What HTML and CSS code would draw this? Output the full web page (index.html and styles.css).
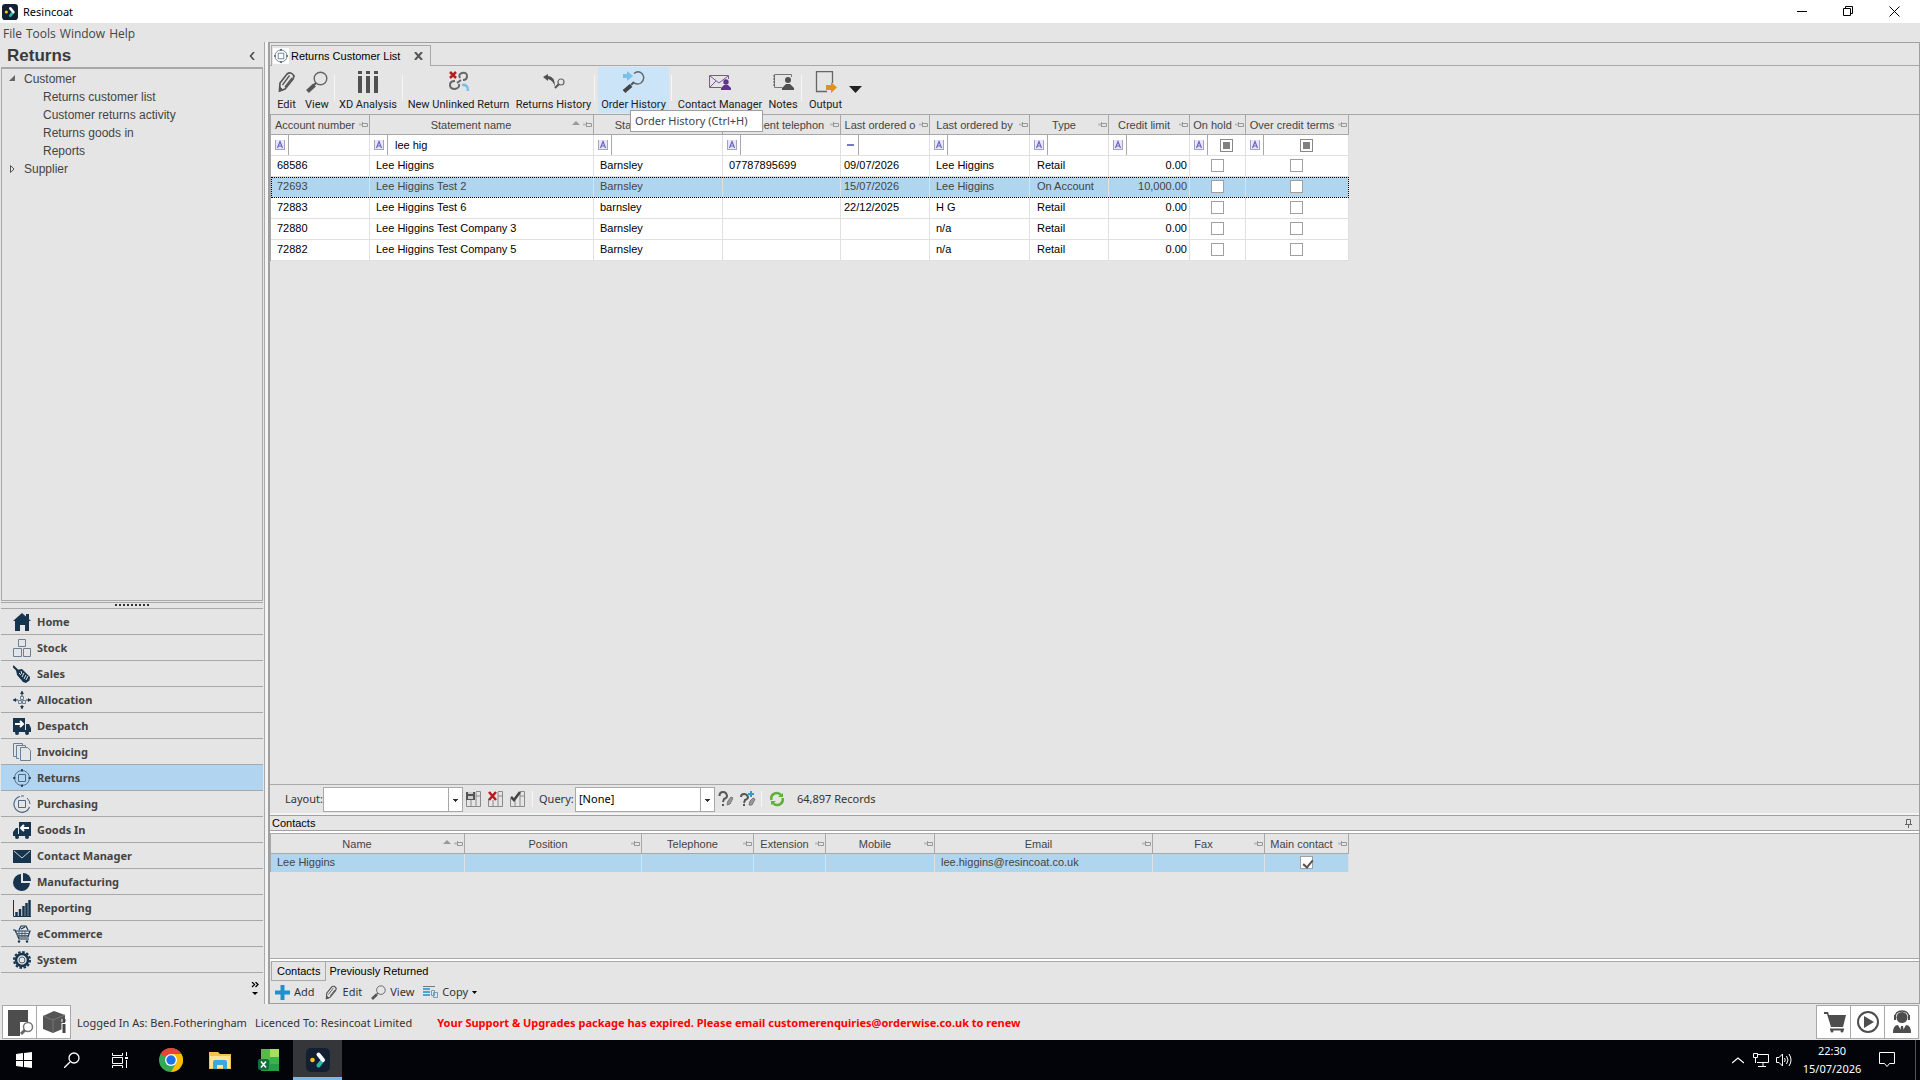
FILE: index.html
```
<!DOCTYPE html>
<html lang="en">
<head>
<meta charset="utf-8">
<title>Resincoat</title>
<link rel="stylesheet" href="styles.css">
</head>
<body>
<svg width="0" height="0" class="defs" aria-hidden="true">
  <symbol id="pin" viewBox="0 0 9 7"><path d="M0 3.500h3" stroke="#bbb" stroke-width="2"/><path d="M3.500 1v5M4 2.500h4.500v3H4" fill="none" stroke="#999"/></symbol>
  <symbol id="abc" viewBox="0 0 10 10"><path d="M0 0h10v10H0z" fill="#e8e8fa"/><path d="M.5 0v10M0 9.500h10M9.500 0v10" stroke="#a3a1c8" fill="none"/><path d="M2.500 8 5 1.500 7.500 8M3.500 6h3" fill="none" stroke="#6a63c8" stroke-width="1.200"/></symbol>
  <symbol id="pencil" viewBox="0 0 22 22"><path d="m3.500 20 .5-8 7-9q4-3 7 2l-1 3-8 10z" fill="none" stroke="#555" stroke-width="1.700"/><path d="m6.500 14 7-9.500M9 16l7-9" stroke="#555" stroke-width="1.300"/><path d="m3.500 20 .5-4 3 3z" fill="#555" stroke="#555"/></symbol>
  <symbol id="lens" viewBox="0 0 22 22"><circle cx="14.500" cy="7.500" r="6.300" fill="none" stroke="#666" stroke-width="1.400"/><path d="M1.500 20.500 8.500 14" stroke="#555" stroke-width="4"/><path d="m8 14 2-2" stroke="#555" stroke-width="2"/></symbol>
  <symbol id="target" viewBox="0 0 18 18"><circle cx="9" cy="9" r="7.500" fill="none" stroke="#4c6a85"/><path d="M5.500 5.500h7v7h-7z" fill="none" stroke="#4c6a85"/><path d="M9 0v2.500M9 15.500V18M0 9h2.500M15.500 9H18" stroke="#17344f" stroke-width="1.500"/></symbol>
  <symbol id="brand" viewBox="0 0 24 24"><rect width="24" height="24" rx="5" fill="#132033"/><circle cx="6.500" cy="12" r="2.300" fill="#f9c61a"/><path d="m12.500 17.500 4-5" stroke="#2bb9a9" stroke-width="4" stroke-linecap="round"/><path d="m12.500 6.500 4.500 5.500" stroke="#fff" stroke-width="4" stroke-linecap="round"/></symbol>
  <symbol id="sheet" viewBox="0 0 16 16"><path d="M.5 8v7.500h14V.5H10M5 9v6M10 1v14M10 5h5" fill="none" stroke="#8a8a8a"/></symbol>
</svg>

<header class="titlebar">
  <svg class="i16"><use href="#brand"/></svg>
  <h1>Resincoat</h1>
  <div class="winbuttons">
    <button aria-label="Minimise"><svg width="11" height="11"><path d="M0 5.500h10" stroke="#000"/></svg></button>
    <button aria-label="Restore"><svg width="11" height="11"><path d="M.5 2.500h7v7h-7zM2.500 2V.5h7v7H8" fill="none" stroke="#000"/></svg></button>
    <button aria-label="Close"><svg width="11" height="11"><path d="m.5.5 10 10m0-10-10 10" stroke="#000"/></svg></button>
  </div>
</header>
<nav class="menubar"><button>File</button><button>Tools</button><button>Window</button><button>Help</button></nav>

<div class="workspace">
  <aside class="sidebar">
    <div class="side-head"><h2>Returns</h2><button aria-label="Collapse"><svg width="6" height="8"><path d="M5 0 1.500 4 5 8" fill="none" stroke="#444" stroke-width="1.500"/></svg></button></div>
    <ul class="tree">
      <li><svg class="twist"><path d="M6 0v6H0z" fill="#666"/></svg>Customer
        <ul><li>Returns customer list</li><li>Customer returns activity</li><li>Returns goods in</li><li>Reports</li></ul>
      </li>
      <li><svg class="twist"><path d="M1.500.5v7L5 4z" fill="none" stroke="#555"/></svg>Supplier</li>
    </ul>
    <div class="grip"><i></i></div>
    <nav class="modules">
      <a href="#"><svg><path d="m9 0 9 8h-2v10h-4v-6H7v6H2V8H0z" fill="#17344f"/><path d="M13 1h3v5h-3z" fill="#17344f"/></svg>Home</a>
      <a href="#"><svg><path d="M5.500.5h7v7h-7zM.5 9.500h8v8h-8zM10.500 9.500h7v8h-7z" fill="none" stroke="#6b8093"/></svg>Stock</a>
      <a href="#"><svg><path d="m0 1 5 5" stroke="#17344f" stroke-width="2"/><path d="m3 5 6-1 8 8-.5 3.500L13 18l-3-1-6-7z" fill="#17344f"/><path d="m6 8 2 2m0-4 1 3m2-1-2 4m4-2-2 4m4-3-2 4" stroke="#e5e5e5"/></svg>Sales</a>
      <a href="#"><svg><path d="M9 0v5M9 14v4M0 9h5M13 9h5" stroke="#17344f"/><path d="m7 3 2-3 2 3zM7 15l2 3 2-3zM3 7 0 9l3 2zM15 7l3 2-3 2z" fill="#17344f"/><path d="M7.500 5.500h3v3h-3zM5.500 9.500h3v3h-3zM9.500 9.500h3v3h-3z" fill="none" stroke="#6b8093"/></svg>Allocation</a>
      <a href="#"><svg><path d="M0 1h12v12H0zM13 7h3l2 4v4H0v-2h13z" fill="#17344f"/><circle cx="4" cy="16" r="2" fill="#17344f"/><circle cx="14" cy="16" r="2" fill="#17344f"/><path d="M2 7h7M7 4l3 3-3 3" fill="none" stroke="#fff" stroke-width="2"/></svg>Despatch</a>
      <a href="#"><svg><path d="M3 13.500H.5V.5h9V2M6 15.500H3.500v-13h9V4M7.500 4.500h7l3 3v10h-10z" fill="none" stroke="#6b8093"/></svg>Invoicing</a>
      <a href="#" class="on"><svg><use href="#target"/></svg>Returns</a>
      <a href="#"><svg><path d="M7 1.500A8 8 0 1 0 16.500 12M8 1h3" fill="none" stroke="#4c6a85" stroke-width="1.200"/><path d="M5.500 5.500h7v7h-7zM14 3q3 3 3 6" fill="none" stroke="#4c6a85"/></svg>Purchasing</a>
      <a href="#"><svg><path d="M6 1h12v12H6zM5 7H3l-3 4v4h18v-2H5z" fill="#17344f"/><circle cx="4" cy="16" r="2" fill="#17344f"/><circle cx="14" cy="16" r="2" fill="#17344f"/><path d="M9 7h7M11 4 8 7l3 3" fill="none" stroke="#fff" stroke-width="2"/></svg>Goods In</a>
      <a href="#"><svg><path d="M0 3h18v13H0z" fill="#17344f"/><path d="m1 4 8 7 8-7" fill="none" stroke="#c9d2da"/></svg>Contact Manager</a>
      <a href="#"><svg><path d="M8 1v9h9A8.500 8.500 0 1 1 8 1z" fill="#17344f"/><path d="M10 0a8 8 0 0 1 8 8h-8z" fill="#17344f"/></svg>Manufacturing</a>
      <a href="#"><svg><path d="M.5 1v16.500H18" fill="none" stroke="#17344f"/><path d="M3.500 17v-4M7 17v-7M10.500 17V7M13.500 17V4M16.500 17V1" stroke="#17344f" stroke-width="2.500"/></svg>Reporting</a>
      <a href="#"><svg><path d="M0 5h2l4 9h10M2 6h15l-2 6H5M6 5l2-4 5 0 2 4M8 4l4-2" fill="none" stroke="#17344f" stroke-width="1.200"/><path d="M3 8.500h13M4 10.500h11M6 6v6M9 6v6M12 6v6" stroke="#4c6479"/><circle cx="6" cy="16.500" r="1.200" fill="#17344f"/><circle cx="14" cy="16.500" r="1.200" fill="#17344f"/></svg>eCommerce</a>
      <a href="#"><svg><circle cx="9" cy="9" r="8" fill="none" stroke="#17344f" stroke-width="2" stroke-dasharray="2.500 1.690"/><circle cx="9" cy="9" r="6" fill="none" stroke="#17344f" stroke-width="2.500"/><circle cx="9" cy="9" r="3" fill="none" stroke="#4c6479"/></svg>System</a>
    </nav>
    <div class="side-foot"><button aria-label="Configure"><svg width="8" height="14"><path d="m1 0 2.500 2.500L1 5M4.500 0 7 2.500 4.500 5" fill="none" stroke="#000" stroke-width="1.300"/><path d="M1 10h6l-3 3z"/></svg></button></div>
  </aside>
  <div class="splitter"></div>

  <main class="panel">
    <div class="tabs"><div class="tab"><svg viewBox="-1 -1 20 20"><use href="#target" width="18" height="18"/></svg><span>Returns Customer List</span><button aria-label="Close tab"><svg width="9" height="8"><path d="m1 0 7 8M8 0 1 8" stroke="#555" stroke-width="2"/></svg></button></div></div>
    <div class="toolbar">
      <button><svg><use href="#pencil"/></svg>Edit</button>
      <button><svg><use href="#lens"/></svg>View</button>
      <i></i>
      <button><svg><path d="M3 0v3M11 0v3M19 0v3M3 5v17M11 5v17M19 5v17" stroke="#505050" stroke-width="4"/></svg>XD Analysis</button>
      <i></i>
      <button><svg><path d="m2 1 6 6m0-6L2 7" stroke="#b81c1c" stroke-width="2.500"/><g fill="none" stroke="#666" stroke-width="2"><path d="M12 7q-2-4 2-5 5-1 5 3t-4 4"/><path d="M7 10q-5 0-5 4t5 4q5-1 4-5"/><path d="m9 12 4-3"/></g><path d="M14 14q6-1 6 6" fill="none" stroke="#7cc0ea" stroke-width="2.500"/></svg>New Unlinked Return</button>
      <button><svg><path d="m0 6 5-3v2q7 0 7 11-2-7-7-8v2z" fill="#505050"/><circle cx="18" cy="11" r="3" fill="none" stroke="#666" stroke-width="1.200"/><path d="m12 17 4-4" stroke="#555" stroke-width="2"/></svg>Returns History</button>
      <i></i>
      <span class="tipped">
        <button class="hot"><svg><path d="M0 3h4V0l6 5-6 5V7H0z" fill="#7cc0ea"/><path d="M11 2.500Q15-1 19 2.500q4 5-1 9.500-3 2-7 0" fill="none" stroke="#666" stroke-width="1.400"/><path d="m1 20.500 7-6" stroke="#444" stroke-width="4"/><path d="m8 14 3-3" stroke="#555" stroke-width="2"/></svg>Order History</button>
        <span class="tip" role="tooltip">Order History (Ctrl+H)</span>
      </span>
      <i></i>
      <button><svg><path d="M12 16.500H.5v-12h19V8M1 5l9 7 9-7M1 16l6-6" fill="none" stroke="#7a55a0"/><circle cx="17" cy="11" r="2.700" fill="#62328f"/><path d="M12 19v-2l3-3h4l3 3v2z" fill="#62328f"/></svg>Contact Manager</button>
      <button><svg><path d="M10 16.500H2.500v-13h17V6" fill="none" stroke="#777"/><path d="M1 5h2M1 8h2M1 11h2M1 14h2" stroke="#555"/><circle cx="16" cy="9" r="3" fill="#505050"/><path d="M10 19v-2l4-4h4l4 4v2z" fill="#505050"/></svg>Notes</button>
      <i></i>
      <button><svg><path d="M12 20.500H1.500V.5h16V12" fill="none" stroke="#666" stroke-width="1.300"/><path d="M11 14h5v-3l6 5.500-6 5.500v-3h-5z" fill="#df9318"/></svg>Output</button>
      <button class="more" aria-label="More output options"><svg width="13" height="7"><path d="M0 0h13L6.500 7z" fill="#222"/></svg></button>
    </div>

    <div class="gridarea">
      <table class="grid customers">
        <colgroup><col style="width:99px"><col style="width:224px"><col style="width:129px"><col style="width:118px"><col style="width:89px"><col style="width:100px"><col style="width:79px"><col style="width:81px"><col style="width:56px"><col style="width:103px"></colgroup>
        <thead>
          <tr>
            <th><div><span>Account number</span><svg><use href="#pin"/></svg></div></th>
            <th><div><span>Statement name</span><b></b><svg><use href="#pin"/></svg></div></th>
            <th><div><span>Statement town</span><svg><use href="#pin"/></svg></div></th>
            <th><div><span>Statement telephon</span><svg><use href="#pin"/></svg></div></th>
            <th><div><span>Last ordered o</span><svg><use href="#pin"/></svg></div></th>
            <th><div><span>Last ordered by</span><svg><use href="#pin"/></svg></div></th>
            <th><div><span>Type</span><svg><use href="#pin"/></svg></div></th>
            <th><div><span>Credit limit</span><svg><use href="#pin"/></svg></div></th>
            <th><div><span>On hold</span><svg><use href="#pin"/></svg></div></th>
            <th><div><span>Over credit terms</span><svg><use href="#pin"/></svg></div></th>
          </tr>
          <tr class="filter">
            <td><div><button aria-label="Match"><svg><use href="#abc"/></svg></button><input type="text" aria-label="Filter account number"></div></td>
            <td><div><button aria-label="Match"><svg><use href="#abc"/></svg></button><input type="text" aria-label="Filter statement name" value="lee hig"></div></td>
            <td><div><button aria-label="Match"><svg><use href="#abc"/></svg></button><input type="text" aria-label="Filter town"></div></td>
            <td><div><button aria-label="Match"><svg><use href="#abc"/></svg></button><input type="text" aria-label="Filter telephone"></div></td>
            <td><div><button aria-label="Match"><svg><path d="M2 5h7" stroke="#77c" stroke-width="2"/></svg></button><input type="text" aria-label="Filter last ordered on"></div></td>
            <td><div><button aria-label="Match"><svg><use href="#abc"/></svg></button><input type="text" aria-label="Filter last ordered by"></div></td>
            <td><div><button aria-label="Match"><svg><use href="#abc"/></svg></button><input type="text" aria-label="Filter type"></div></td>
            <td><div><button aria-label="Match"><svg><use href="#abc"/></svg></button><input type="text" aria-label="Filter credit limit"></div></td>
            <td><div><button aria-label="Match"><svg><use href="#abc"/></svg></button><span><input type="checkbox" class="mixed" aria-label="Filter on hold"></span></div></td>
            <td><div><button aria-label="Match"><svg><use href="#abc"/></svg></button><span><input type="checkbox" class="mixed" aria-label="Filter over credit terms"></span></div></td>
          </tr>
        </thead>
        <tbody>
          <tr><td>68586</td><td>Lee Higgins</td><td>Barnsley</td><td>07787895699</td><td>09/07/2026</td><td>Lee Higgins</td><td>Retail</td><td>0.00</td><td><input type="checkbox" aria-label="On hold"></td><td><input type="checkbox" aria-label="Over credit terms"></td></tr>
          <tr class="sel focus"><td>72693</td><td>Lee Higgins Test 2</td><td>Barnsley</td><td></td><td>15/07/2026</td><td>Lee Higgins</td><td>On Account</td><td>10,000.00</td><td><input type="checkbox" aria-label="On hold"></td><td><input type="checkbox" aria-label="Over credit terms"></td></tr>
          <tr><td>72883</td><td>Lee Higgins Test 6</td><td>barnsley</td><td></td><td>22/12/2025</td><td>H G</td><td>Retail</td><td>0.00</td><td><input type="checkbox" aria-label="On hold"></td><td><input type="checkbox" aria-label="Over credit terms"></td></tr>
          <tr><td>72880</td><td>Lee Higgins Test Company 3</td><td>Barnsley</td><td></td><td></td><td>n/a</td><td>Retail</td><td>0.00</td><td><input type="checkbox" aria-label="On hold"></td><td><input type="checkbox" aria-label="Over credit terms"></td></tr>
          <tr><td>72882</td><td>Lee Higgins Test Company 5</td><td>Barnsley</td><td></td><td></td><td>n/a</td><td>Retail</td><td>0.00</td><td><input type="checkbox" aria-label="On hold"></td><td><input type="checkbox" aria-label="Over credit terms"></td></tr>
        </tbody>
      </table>
    </div>

    <div class="querybar">
      <label for="layout">Layout:</label>
      <select id="layout"><option></option></select>
      <button aria-label="Save layout"><svg><use href="#sheet"/><path d="M0 1h9v8H0z" fill="#555"/><path d="M2 1h5v2H2zM2 5h5v3H2z" fill="#ccc"/></svg></button>
      <button aria-label="Delete layout"><svg><use href="#sheet"/><path d="m1 1 7 8m0-8L1 9" stroke="#b81c1c" stroke-width="2.500"/></svg></button>
      <button aria-label="Default layout"><svg><use href="#sheet"/><path d="m1 6 3 3 6-8" fill="none" stroke="#444" stroke-width="2.500"/></svg></button>
      <i></i>
      <label for="query">Query:</label>
      <select id="query"><option>[None]</option></select>
      <button aria-label="Edit query"><svg><path d="M1.500 5q0-4 3.500-4t4 4q0 2-3 3l-1 3M5 13v2" fill="none" stroke="#555" stroke-width="2"/><path d="m9 14 1-4 3-4 2 1-3 6z" fill="#999" stroke="#777"/></svg></button>
      <button aria-label="Add query"><svg><path d="M1 6q0-3 3-3t4 3q0 2-3 3l-1 3M4 13v2" fill="none" stroke="#555" stroke-width="2"/><path d="m9 14 1-4 3-3 2 1-3 6z" fill="#999" stroke="#777"/><path d="M11 0v6M8 3h6" stroke="#2f9bd6" stroke-width="2"/></svg></button>
      <i class="tight"></i>
      <button aria-label="Refresh"><svg><path d="M2.500 9A5.500 5.500 0 0 1 12 4M13.500 7A5.500 5.500 0 0 1 4 12" fill="none" stroke="#5fb033" stroke-width="2.500"/><path d="M9 6h5V2zM7 10H2v4z" fill="#5fb033"/></svg></button>
      <output>64,897 Records</output>
    </div>

    <section class="detail">
      <div class="caption"><h3>Contacts</h3><button aria-label="Pin"><svg width="7" height="9"><path d="M1.500.5h4v5h-4zM0 5.500h7M3.500 6v3" fill="none" stroke="#666"/></svg></button></div>
      <div class="detailgrid">
        <table class="grid contacts">
          <colgroup><col style="width:194px"><col style="width:177px"><col style="width:112px"><col style="width:72px"><col style="width:109px"><col style="width:218px"><col style="width:112px"><col style="width:84px"></colgroup>
          <thead><tr>
            <th><div><span>Name</span><b></b><svg><use href="#pin"/></svg></div></th>
            <th><div><span>Position</span><svg><use href="#pin"/></svg></div></th>
            <th><div><span>Telephone</span><svg><use href="#pin"/></svg></div></th>
            <th><div><span>Extension</span><svg><use href="#pin"/></svg></div></th>
            <th><div><span>Mobile</span><svg><use href="#pin"/></svg></div></th>
            <th><div><span>Email</span><svg><use href="#pin"/></svg></div></th>
            <th><div><span>Fax</span><svg><use href="#pin"/></svg></div></th>
            <th><div><span>Main contact</span><svg><use href="#pin"/></svg></div></th>
          </tr></thead>
          <tbody><tr class="sel"><td>Lee Higgins</td><td></td><td></td><td></td><td></td><td>lee.higgins@resincoat.co.uk</td><td></td><td><input type="checkbox" checked aria-label="Main contact"></td></tr></tbody>
        </table>
      </div>
      <div class="subtabs"><button class="on">Contacts</button><button>Previously Returned</button></div>
      <div class="subbar">
        <button><svg viewBox="0 0 15 15"><path d="M7.500 0v15M0 7.500h15" stroke="#2090d0" stroke-width="4"/></svg>Add</button>
        <button><svg viewBox="0 0 22 22"><use href="#pencil" width="22" height="22"/></svg>Edit</button>
        <button><svg viewBox="0 0 22 22"><use href="#lens" width="22" height="22"/></svg>View</button>
        <button><svg viewBox="0 0 15 15"><path d="M0 4h7M0 7h7M0 10h7" stroke="#4ba3d6" stroke-width="2"/><path d="M0 1.500h12" stroke="#777"/><path d="M8.500 5.500h3v5h-3zM10.500 7.500h4v5h-4z" fill="#dbe9f2" stroke="#7a9bb0"/></svg>Copy<svg class="drop"><path d="M0 0h5L2.500 3z"/></svg></button>
      </div>
    </section>
  </main>
</div>

<footer class="statusbar">
  <button class="tile" aria-label="Find"><svg viewBox="0 0 28 28"><path d="M2 2h20v12h-8v14H2z" fill="#4d4d4d"/><circle cx="22" cy="19" r="4.500" fill="none" stroke="#777" stroke-width="1.500"/><path d="m15 26 4-4" stroke="#666" stroke-width="3"/></svg></button>
  <button class="tile" aria-label="Product information"><svg viewBox="0 0 28 28"><path d="m14 3 11 4v13l-12 5-10-4V8z" fill="#555"/><path d="m3 8 10 4 12-5M13 12v13" fill="none" stroke="#777"/><path d="M24 11v3M24 15v10" stroke="#fff" stroke-width="5"/><path d="M24 11v3M24 16v9" stroke="#444" stroke-width="3"/></svg></button>
  <p>Logged In As: Ben.Fotheringham</p>
  <p>Licenced To: Resincoat Limited</p>
  <strong>Your Support &amp; Upgrades package has expired. Please email customerenquiries@orderwise.co.uk to renew</strong>
  <div class="right">
    <button class="tile" aria-label="Shop"><svg viewBox="0 0 28 28"><path d="M4 4h4l1 3h17l-3 12H11L7 6H4z" fill="#4d4d4d"/><path d="M10 21.500h14" stroke="#4d4d4d" stroke-width="2"/><circle cx="12" cy="23" r="1.500" fill="#4d4d4d"/><circle cx="22" cy="23" r="1.500" fill="#4d4d4d"/></svg></button>
    <button class="tile" aria-label="Play"><svg viewBox="0 0 28 28"><circle cx="14" cy="14" r="10" fill="none" stroke="#4d4d4d" stroke-width="2"/><path d="M10 8v12l10-6z" fill="#4d4d4d"/></svg></button>
    <button class="tile" aria-label="Support"><svg viewBox="0 0 28 28"><circle cx="14" cy="9.500" r="5.500" fill="#4d4d4d"/><path d="M7 10q0-7 7-7t7 7" fill="none" stroke="#4d4d4d" stroke-width="1.300"/><path d="M6 7h2v5H6zM20 7h2v5h-2zM5 25q0-8 5-8h8q5 0 5 8z" fill="#4d4d4d"/><path d="m10 17 4 7 4-7z" fill="#fff"/><path d="M13 18h2l1 6h-4z" fill="#4d4d4d"/></svg></button>
  </div>
</footer>

<div class="taskbar">
  <button aria-label="Start"><svg width="16" height="16"><path d="m0 2 7-1v7H0zM8 1l8-1v8H8zM0 9h7v6l-7-1zM8 9h8v7l-8-1z" fill="#fff"/></svg></button>
  <button aria-label="Search"><svg width="16" height="16"><circle cx="10" cy="6" r="5" fill="none" stroke="#fff" stroke-width="1.300"/><path d="m0 16 6-6" stroke="#fff" stroke-width="1.300"/></svg></button>
  <button aria-label="Task view"><svg width="16" height="16"><path d="M.5 1v2.500h10V1M.5 5.500h10v6H.5zM.5 16v-2.500h10V16M14.500 0v4M14.500 8v8" fill="none" stroke="#fff"/><path d="M13 5h3v2h-3z" fill="#fff"/></svg></button>
  <button class="app" aria-label="Chrome"><svg width="24" height="24"><circle cx="12" cy="12" r="12" fill="#34a853"/><path d="M12 12 1.600 6A12 12 0 0 1 22.400 6z" fill="#ea4335"/><path d="M12 6h10.400A12 12 0 0 1 12 24l5-9z" fill="#fbbc04"/><circle cx="12" cy="12" r="6" fill="#fff"/><circle cx="12" cy="12" r="4.700" fill="#1a73e8"/></svg></button>
  <button class="app" aria-label="File Explorer"><svg width="22" height="20"><path d="M0 2h9l2 2h11v15H0z" fill="#f3c44c"/><path d="M1 6h20v12H1z" fill="#fde595"/><path d="M4 12q0-2 2-2h10q2 0 2 2v7h-4v-4H8v4H4z" fill="#3aa7e0"/></svg></button>
  <button class="app" aria-label="Excel"><svg width="22" height="22"><path d="M5 0h16v22H3V3z" fill="#21a045"/><path d="M3 0h9v11H3z" fill="#58b947"/><path d="M12 0h9v8h-9z" fill="#a5df5c"/><path d="M12 8h9v7h-9z" fill="#37b44a"/><rect y="10" width="11" height="11" rx="2" fill="#0f703b"/><path d="m3 12.500 5 6m0-6-5 6" stroke="#fff" stroke-width="1.500"/></svg></button>
  <button class="app active" aria-label="OrderWise"><svg width="24" height="24"><use href="#brand"/></svg></button>
  <div class="tray">
    <button aria-label="Show hidden icons"><svg width="12" height="7"><path d="m0 6 6-5 6 5" fill="none" stroke="#fff" stroke-width="1.300"/></svg></button>
    <button aria-label="Network"><svg width="16" height="14"><path d="M5 1.500h10.500v8H4M10 10v3M5 13.500h8M.5.5h4v4h-4zM2.500 5v5" fill="none" stroke="#fff"/></svg></button>
    <button aria-label="Volume"><svg width="16" height="14"><path d="M.5 4.500H3L6.500 1v12L3 9.500H.5zM8.500 5q1.500 2 0 4M10.500 3q3 4 0 8M13 1q4 6 0 12" fill="none" stroke="#fff"/></svg></button>
    <time datetime="2026-07-15T22:30">22:30<br>15/07/2026</time>
    <button class="note" aria-label="Notifications"><svg width="16" height="16"><path d="M.5.500h15v11h-5L8 14.500 5.500 11.500h-5z" fill="none" stroke="#fff"/></svg></button>
    <button class="peek" aria-label="Show desktop"></button>
  </div>
</div>
</body>
</html>
```
FILE: styles.css
```
* { box-sizing: border-box; }
html, body { height: 100%; }
body {
  margin: 0;
  display: flex;
  flex-direction: column;
  background: #e5e5e5;
  color: #333;
  font: 11px/16px "Noto Sans", "Open Sans", sans-serif;
}
h1, h2, h3, p, ul { margin: 0; padding: 0; font-weight: normal; }
button { margin: 0; padding: 0; border: 0; background: none; color: inherit; font: inherit; }
svg { display: block; flex: none; }
.defs { position: absolute; }

/* Title and menu */
.titlebar { display: flex; align-items: center; height: 23px; padding: 0 3px 0 2px; background: #fff; color: #000; }
.titlebar h1 { margin-left: 5px; font-size: 11px; }
.i16 { width: 16px; height: 16px; }
.winbuttons { display: flex; margin-left: auto; }
.winbuttons button { display: grid; place-items: center; width: 46px; height: 19px; }
.menubar { display: flex; gap: 4px; height: 19px; padding-left: 3px; color: #444; font-size: 12px; font-family: "Open Sans", sans-serif; }
.menubar button { height: 21px; }

.workspace { display: flex; flex: 1; min-height: 0; }

/* Sidebar */
.sidebar { display: flex; flex-direction: column; width: 264px; padding: 0 1px; flex: none; }
.side-head { display: flex; justify-content: space-between; align-items: center; height: 25px; padding: 2px 8px 0 6px; }
.side-head h2 { font: bold 17px/23px "Liberation Sans", sans-serif; color: #3a3a3a; }
.tree {
  flex: 1;
  border: 1px solid #a8a8a8;
  border-top-width: 2px;
  padding-top: 1px;
  list-style: none;
  color: #444;
  font: 12px/18px "Liberation Sans", sans-serif;
}
.tree > li { position: relative; padding-left: 22px; }
.tree ul { padding-left: 19px; list-style: none; }
.twist { position: absolute; left: 7px; top: 5px; width: 8px; height: 8px; }
.grip { display: flex; justify-content: center; height: 7px; margin-top: 1px; border: solid #a8a8a8; border-width: 1px 0; }
.grip i { width: 35px; height: 2px; margin-top: 1px; background: repeating-linear-gradient(90deg, #333 0 2px, transparent 2px 4px); }
.modules a {
  display: flex;
  align-items: center;
  gap: 6px;
  height: 26px;
  padding-left: 12px;
  border-bottom: 1px solid #a8a8a8;
  color: #444;
  font-weight: bold;
  text-decoration: none;
}
.modules svg { width: 18px; height: 18px; }
.modules .on { background: #b1d4f0; }
.side-foot { display: flex; justify-content: flex-end; height: 31px; padding: 9px 4px 0 0; }
.side-foot button { height: 14px; }
.splitter { width: 4px; flex: none; border-left: 1px solid #a8a8a8; background: #f4f4f4; }

/* Main panel */
.panel {
  display: flex;
  flex: 1;
  flex-direction: column;
  min-width: 0;
  border: 1px solid #a0a0a0;
  border-left-width: 2px;
}
.tabs { display: flex; height: 23px; padding: 2px 1px 0; border-bottom: 1px solid #a8a8a8; }
.tab {
  display: flex;
  align-items: center;
  height: 21px;
  padding: 0 7px 0 1px;
  border: 1px solid #a8a8a8;
  border-bottom: 0;
  background: #e5e5e5;
  color: #000;
  font: 11px/16px "Liberation Sans", sans-serif;
}
.tab > svg { width: 16px; height: 16px; background: #fff; }
.tab span { margin: 0 14px 0 2px; }

.toolbar {
  display: grid;
  grid-template-columns: 29px 32px 2px 66px 2px 111px 79px 4px 73px 4px 92px 34px 3px 45px 14px;
  height: 48px;
  padding: 1px 0 1px 2px;
  color: #222;
  font: 11px/14px Roboto, sans-serif;
}
.toolbar button { display: flex; flex-direction: column; align-items: center; gap: 5px; padding-top: 4px; white-space: nowrap; }
.toolbar button svg { width: 22px; height: 22px; }
.toolbar > i { width: 1px; height: 26px; margin: 8px 0 0 1px; background: #f6f6f6; }
.toolbar .hot { width: 71px; height: 46px; margin-left: 1px; background: #cce4f7; }
.toolbar .more svg { width: 13px; height: 7px; margin-top: 15px; }
.tipped { position: relative; }
.tip {
  position: absolute;
  z-index: 2;
  left: 33px;
  top: 43px;
  padding: 1px 14px 2px 4px;
  border: 1px solid #a0a0a0;
  background: #fff;
  color: #444;
  font: 11px/17px "Noto Sans", sans-serif;
  white-space: nowrap;
}

.gridarea { flex: 1; min-height: 0; border-top: 1px solid #a8a8a8; }
.grid {
  width: 1079px;
  border-left: 1px solid #a8a8a8;
  border-spacing: 0;
  table-layout: fixed;
  background: #fff;
  color: #000;
  font: 11px/16px "Liberation Sans", sans-serif;
}
.grid th { height: 20px; padding: 0; border: solid #a8a8a8; border-width: 0 1px 1px 0; background: #e5e5e5; color: #444; font-weight: normal; }
.grid th div { display: flex; align-items: center; }
.grid th span { flex: 1; overflow: hidden; white-space: nowrap; }
.grid th svg { width: 9px; height: 7px; margin-right: 1px; }
.grid th b { border: 4px solid transparent; border-top: 0; border-bottom-color: #999; margin: 0 3px 3px 0; }
.grid td { height: 21px; padding: 0 3px 2px 6px; border: solid #e0e0e0; border-width: 0 1px 1px 0; white-space: nowrap; }
.grid .filter td { padding: 0; }
.filter div { display: flex; height: 20px; }
.filter button { width: 18px; padding-left: 4px; border-right: 1px solid #a8a8a8; }
.filter button svg { width: 10px; height: 10px; }
.filter span { display: grid; flex: 1; place-items: center; }
.filter input[type="text"] { flex: 1; width: 0; padding: 0 0 0 7px; border: 0; outline: 0; background: none; font: inherit; }
.customers tbody td:nth-child(5) { padding-left: 3px; }
.customers tbody td:nth-child(7) { padding-left: 7px; }
.customers tbody td:nth-child(8) { text-align: right; padding-right: 2px; }
.customers tbody td:nth-child(n+9), .contacts td:last-child { padding: 0 1px 2px 0; text-align: center; }
.grid .sel td { background: #b0d5ef; color: #444; }
.grid .focus { outline: 1px dotted #000; outline-offset: -1px; }
.contacts tbody td { height: 18px; border-bottom: 0; }
input[type="checkbox"] {
  appearance: none;
  display: block;
  width: 13px;
  height: 13px;
  margin: 0 auto;
  border: 1px solid #a0a0a0;
  background: #fff;
}
input[type="checkbox"].mixed { border-color: #888; background: linear-gradient(#808080, #808080) center / 7px 7px no-repeat #fff; }
input[type="checkbox"]:checked { position: relative; }
input[type="checkbox"]:checked::after {
  content: "";
  position: absolute;
  left: 4px;
  top: 1px;
  width: 4px;
  height: 8px;
  border: solid #555;
  border-width: 0 2px 2px 0;
  transform: rotate(40deg);
}

/* Query bar */
.querybar { display: flex; align-items: center; height: 29px; padding-left: 15px; border-top: 1px solid #a8a8a8; }
.querybar select {
  width: 140px;
  height: 25px;
  padding: 0 0 0 3px;
  appearance: none;
  border: 1px solid #a8a8a8;
  border-radius: 0;
  color: #000;
  font: inherit;
  background:
    linear-gradient(#a8a8a8, #a8a8a8) right 13px top / 1px 100% no-repeat,
    linear-gradient(#333, #333) right 4px top 11px / 5px 1px no-repeat,
    linear-gradient(#333, #333) right 5px top 12px / 3px 1px no-repeat,
    linear-gradient(#333, #333) right 6px top 13px / 1px 1px no-repeat,
    #fff;
}
.querybar label { width: 38px; }
.querybar label[for="query"] { width: 36px; }
.querybar button { margin: 0 3px; }
.querybar button svg { width: 16px; height: 16px; }
.querybar > i { width: 1px; height: 16px; margin: 0 6px 0 3px; background: #f6f6f6; }
.querybar > .tight { margin: 0 4px 0 2px; }
.querybar output { margin-left: 9px; }

/* Contact details */
.detail { border-top: 2px solid #f4f4f4; }
.caption {
  display: flex;
  justify-content: space-between;
  align-items: center;
  height: 16px;
  padding: 0 7px 0 2px;
  border: solid #a0a0a0;
  border-width: 1px 0;
  color: #000;
}
.caption h3 { font: 11px/14px "Liberation Sans", sans-serif; }
.detailgrid { height: 130px; border: solid #fff; border-width: 2px 0; box-shadow: inset 0 -1px #a8a8a8; }
.detailgrid::before { content: ""; display: block; border-top: 1px solid #a8a8a8; }
.subtabs { display: flex; height: 20px; margin-left: 1px; border-top: 1px solid #a8a8a8; color: #000; font: 11px/16px "Liberation Sans", sans-serif; }
.subtabs button { padding: 0 3px 2px; }
.subtabs .on { padding: 0 5px 1px; border: 1px solid #a8a8a8; border-top: 0; }
.subbar { display: flex; height: 22px; padding-left: 5px; gap: 9px; }
.subbar button { display: flex; align-items: center; gap: 4px; }
.subbar svg { width: 15px; height: 15px; }
.subbar .drop { width: 5px; height: 3px; }

/* Status bar */
.statusbar { display: flex; align-items: center; height: 36px; padding: 0 1px 0 2px; }
.tile { display: grid; place-items: center; width: 35px; height: 34px; margin-right: -1px; border: 1px solid #a8a8a8; background: #fff; }
.tile svg { width: 28px; height: 28px; }
.statusbar p { margin-left: 8px; padding-top: 1px; }
.statusbar .tile + p { margin-left: 7px; }
.statusbar strong { margin-left: 25px; padding-top: 1px; color: #f00; }
.right { display: flex; margin-left: auto; padding-right: 1px; }

/* Taskbar */
.taskbar { display: flex; height: 40px; background: #02040a; color: #fff; }
.taskbar button { display: grid; place-items: center; width: 48px; }
.taskbar .app { width: 49px; }
.taskbar .app:nth-child(4) { margin-left: 2px; }
.taskbar .active { padding-top: 3px; border-bottom: 3px solid #76b9ed; background: #34363a; }
.tray { display: flex; align-items: center; margin-left: auto; text-align: center; }
.tray button { width: 23px; height: 40px; }
.tray time { width: 74px; line-height: 18px; }
.tray .note { width: 36px; }
.tray .peek { width: 5px; margin-left: 10px; border-left: 1px solid #555; }
```
